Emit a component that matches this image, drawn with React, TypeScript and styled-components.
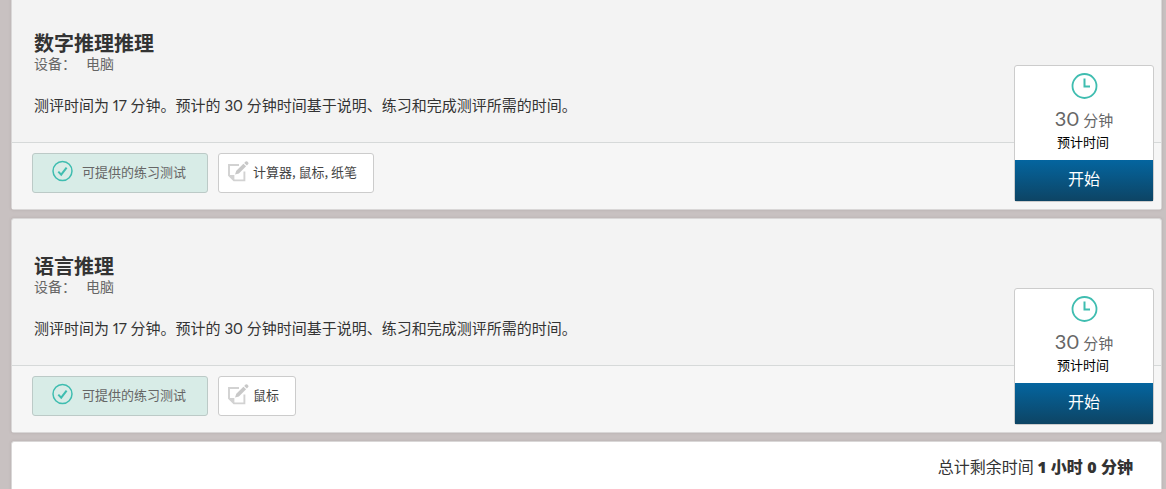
import React from "react";
import styled, { createGlobalStyle } from "styled-components";

const GlobalStyle = createGlobalStyle`
  *, *::before, *::after { box-sizing: border-box; }
  body {
    margin: 0;
    background: #c8c1c1;
    color: #333;
    font-family: Lato, "Noto Sans CJK SC", sans-serif;
    font-variant-numeric: proportional-nums;
    overflow: hidden;
  }
`;

const Page = styled.main`
  display: flex;
  flex-direction: column;
  gap: 8px;
  margin: -5px 4px 0 11px;
`;

const Card = styled.section`
  position: relative;
  border: 1px solid #d9d7d7;
  border-radius: 3px;
  background: #f3f3f3;
  box-shadow: 0 0 3px rgba(90, 70, 70, 0.15);
`;

const Details = styled.div`
  padding: 35px 160px 25px 22px;
`;

const Title = styled.h2`
  margin: 0;
  font-size: 20px;
  line-height: 24px;
  font-weight: 700;
`;

const Device = styled.p`
  display: flex;
  gap: 10px;
  margin: 0;
  color: #666;
  font-size: 14px;
  line-height: 18px;
`;

const Description = styled.p`
  margin: 20px 0 0;
  font-size: 15px;
  line-height: 24px;
`;

const Tools = styled.div`
  display: flex;
  gap: 10px;
  padding: 10px 160px 16px 20px;
  border-top: 1px solid #d6d9d9;
  background: #f6f6f6;
`;

const Tag = styled.div<{ $practice?: boolean }>`
  display: flex;
  align-items: center;
  gap: ${(p) => (p.$practice ? 8 : 4)}px;
  height: 40px;
  padding: ${(p) => (p.$practice ? "0 21px 2px 18px" : "0 16px 2px 8px")};
  border: 1px solid ${(p) => (p.$practice ? "#bccac7" : "#ccc")};
  border-radius: 3px;
  background: ${(p) => (p.$practice ? "#d8ece7" : "#fff")};
  color: ${(p) => (p.$practice ? "#666" : "#444")};
  font-family: "Noto Sans CJK SC", sans-serif;
  font-size: 13px;
  line-height: 20px;

  svg { margin-bottom: 2px; }
`;

const Panel = styled.div`
  position: absolute;
  top: 69px;
  right: 7px;
  display: flex;
  flex-direction: column;
  align-items: center;
  width: 140px;
  padding-top: 6px;
  border: 1px solid #ccc;
  border-radius: 3px;
  background: #fff;
`;

const Minutes = styled.div`
  margin-top: 5px;
  color: #666;
  font-size: 15px;
  line-height: 26px;

  span { font-size: 20px; }
`;

const Caption = styled.div`
  padding: 0 2px 9px 0;
  color: #000;
  font-size: 13px;
  line-height: 18px;
`;

const StartButton = styled.button`
  align-self: stretch;
  height: 41px;
  padding: 0 0 5px;
  border: 0;
  background: linear-gradient(#04659f, #0d4464);
  color: #fff;
  font: inherit;
  font-size: 16px;
  cursor: pointer;
`;

const Summary = styled.footer`
  padding: 13px 28px 24px;
  border: 1px solid #d9d7d7;
  border-radius: 3px;
  background: #fff;
  box-shadow: 0 0 3px rgba(90, 70, 70, 0.15);
  font-size: 16px;
  line-height: 24px;
  text-align: right;

  strong {
    font-family: "Open Sans", "Noto Sans CJK SC", sans-serif;
    font-weight: 800;
  }
`;

const CheckIcon = () => (
  <svg width="23" height="22" viewBox="0 0 23 22" fill="none" stroke="#3fbdb0" aria-hidden="true">
    <circle cx="11.5" cy="11" r="9.5" strokeWidth="1.5" />
    <path d="M7.3 11.6 10.2 14.6 15.6 7.6" strokeWidth="2" />
  </svg>
);

const NoteIcon = () => (
  <svg width="22" height="22" viewBox="0 0 22 22" fill="none" aria-hidden="true">
    <path d="M12 5H2v10.4l5 5h10.4v-9" stroke="#d2d2d2" strokeWidth="1.9" />
    <path d="M2 15h5.4v5.4z" fill="#d2d2d2" />
    <path d="M8 14.6 9.3 10.8 16.4 3.7 19.1 6.3 11.9 13.4z" fill="#c8c8c8" />
    <path d="M17.2 2.9 18.6 1.5Q19.4.8 20.3 1.6L21.2 2.5Q22 3.3 21.2 4.1L19.9 5.5z" fill="#c8c8c8" />
  </svg>
);

const ClockIcon = () => (
  <svg width="28" height="28" viewBox="0 0 28 28" fill="none" stroke="#3fbdb0" aria-hidden="true">
    <circle cx="14.5" cy="14" r="12" strokeWidth="1.8" />
    <path d="M14.5 6.5v8h5.5" strokeWidth="2" />
  </svg>
);

interface AssessmentProps {
  title: string;
  tools: string;
}

const Assessment = ({ title, tools }: AssessmentProps) => (
  <Card>
    <Details>
      <Title>{title}</Title>
      <Device>
        <span>设备：</span>
        <span>电脑</span>
      </Device>
      <Description>
        测评时间为 17 分钟。预计的 30 分钟时间基于说明、练习和完成测评所需的时间。
      </Description>
    </Details>
    <Tools>
      <Tag $practice>
        <CheckIcon />
        可提供的练习测试
      </Tag>
      <Tag>
        <NoteIcon />
        {tools}
      </Tag>
    </Tools>
    <Panel>
      <ClockIcon />
      <Minutes>
        <span>30</span> 分钟
      </Minutes>
      <Caption>预计时间</Caption>
      <StartButton type="button">开始</StartButton>
    </Panel>
  </Card>
);

export default function App() {
  return (
    <>
      <GlobalStyle />
      <Page lang="zh-CN">
        <Assessment title="数字推理推理" tools="计算器, 鼠标, 纸笔" />
        <Assessment title="语言推理" tools="鼠标" />
        <Summary>
          总计剩余时间 <strong>1 小时 0 分钟</strong>
        </Summary>
      </Page>
    </>
  );
}
